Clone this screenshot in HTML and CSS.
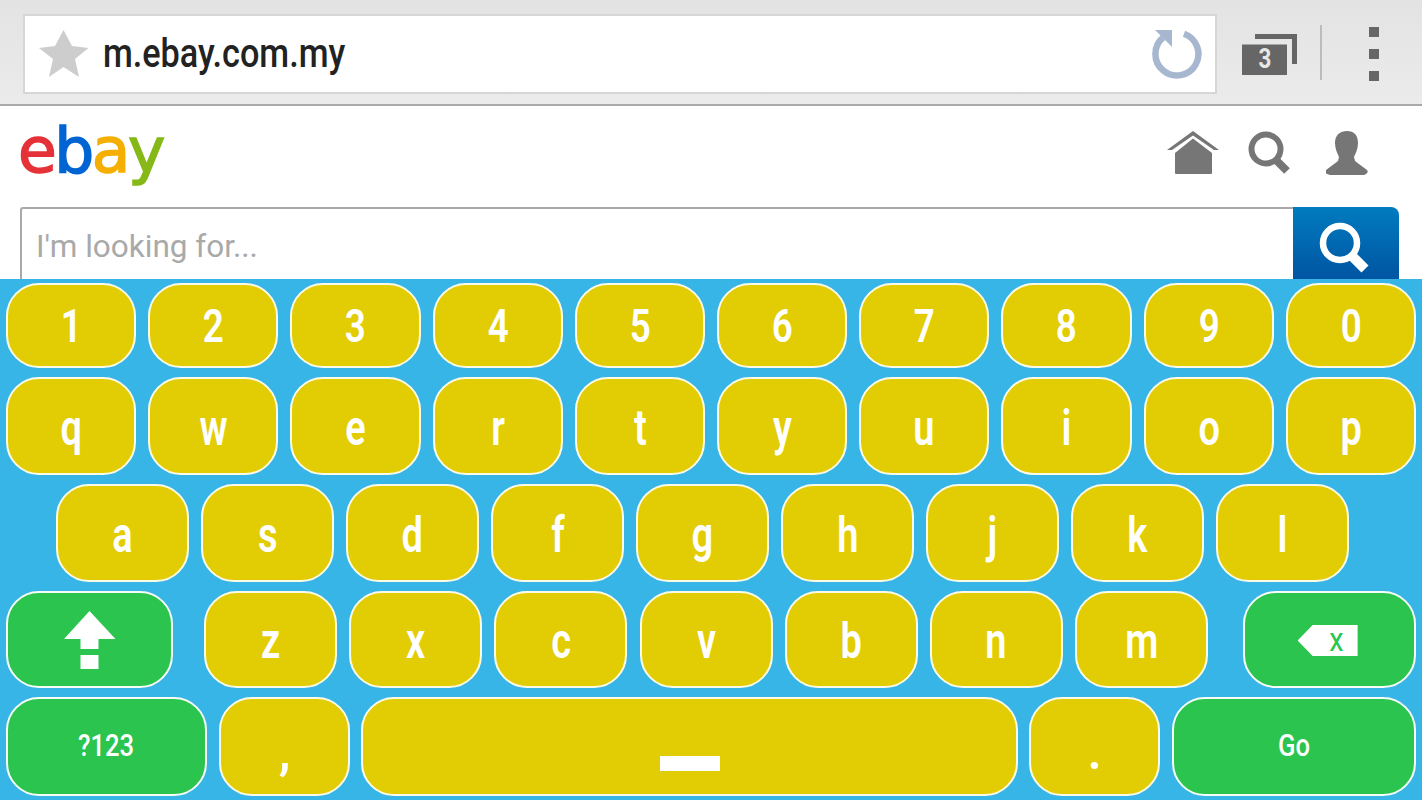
FILE: index.html
```html
<!DOCTYPE html>
<html lang="en">
<head>
<meta charset="utf-8">
<title>m.ebay.com.my</title>
<link rel="stylesheet" href="styles.css">
</head>
<body>
<header class="toolbar">
  <div class="urlbar">
    <svg class="star" width="50" height="48" viewBox="0 0 50 48"><path fill="#cdcdcd" d="M24.500 0L33 16l16.500 2L36 29l4 18-15.500-10L10 47l4-18L0 18l16-2z"/></svg>
    <span class="url"><span class="url-inner">m.ebay.com.my</span></span>
    <svg class="reload" width="52" height="52" viewBox="0 0 52 52"><path fill="none" stroke="#a7b7cf" stroke-width="6.500" d="M33 5.700A21.500 21.500 0 1 1 12 9.600"/><path fill="#a7b7cf" d="M4 2h17v17z"/></svg>
  </div>
  <svg class="tabs" width="56" height="44" viewBox="0 0 56 44"><path fill="none" stroke="#666" stroke-width="5" d="M13 2.500h39.500V30"/><rect x="0" y="10.500" width="45" height="30.500" fill="#666"/></svg>
  <span class="tab-count">3</span>
  <div class="divider"></div>
  <div class="menu"><i></i><i></i><i></i></div>
</header>
<main class="page">
  <div class="site-head">
    <div class="logo"><span class="lr">e</span><span class="lb">b</span><span class="ly">a</span><span class="lg">y</span></div>
    <div class="site-icons">
      <svg class="ic-home" width="52" height="44" viewBox="0 0 52 44"><path fill="#767676" d="M26 7.500L45 22v20a1 1 0 0 1-1 1H9a1 1 0 0 1-1-1V22z"/><path fill="#767676" d="M26 0l26 19h-5L26 4.500 5 19H0z"/></svg>
      <svg class="ic-search" width="44" height="44" viewBox="0 0 44 44"><circle cx="18" cy="18" r="14.500" fill="none" stroke="#767676" stroke-width="6"/><path stroke="#767676" stroke-width="8" d="M27 28l12 12"/></svg>
      <svg class="ic-user" width="42" height="44" viewBox="0 0 42 44"><path fill="#767676" d="M21 0c7 0 11 4 11 12 0 5-2 10-4 14l1 4 12 9c1 1 1 3-1 4l-2 1H4l-3-1c-2-1-2-3-1-4l12-9 1-4c-2-4-4-9-4-14C9 4 14 0 21 0z"/></svg>
    </div>
  </div>
  <div class="search">
    <div class="search-box"><span>I'm looking for...</span></div>
    <div class="search-btn">
      <svg width="52" height="52" viewBox="0 0 52 52"><circle cx="21" cy="21" r="17" fill="none" stroke="#fff" stroke-width="6.500"/><path stroke="#fff" stroke-width="10" d="M32 33l14 14"/></svg>
    </div>
  </div>
</main>
<section class="keyboard">
  <div class="row row-num">
    <div class="key"><span class="g">1</span></div><div class="key"><span class="g">2</span></div><div class="key"><span class="g">3</span></div><div class="key"><span class="g">4</span></div><div class="key"><span class="g">5</span></div><div class="key"><span class="g">6</span></div><div class="key"><span class="g">7</span></div><div class="key"><span class="g">8</span></div><div class="key"><span class="g">9</span></div><div class="key"><span class="g">0</span></div>
  </div>
  <div class="row row-top">
    <div class="key"><span class="l">q</span></div><div class="key"><span class="l">w</span></div><div class="key"><span class="l">e</span></div><div class="key"><span class="l">r</span></div><div class="key"><span class="l">t</span></div><div class="key"><span class="l">y</span></div><div class="key"><span class="l">u</span></div><div class="key"><span class="l">i</span></div><div class="key"><span class="l">o</span></div><div class="key"><span class="l">p</span></div>
  </div>
  <div class="row row-home">
    <div class="key"><span class="l">a</span></div><div class="key"><span class="l">s</span></div><div class="key"><span class="l">d</span></div><div class="key"><span class="l">f</span></div><div class="key"><span class="l">g</span></div><div class="key"><span class="l">h</span></div><div class="key"><span class="l">j</span></div><div class="key"><span class="l">k</span></div><div class="key"><span class="l">l</span></div>
  </div>
  <div class="row row-low">
    <div class="key fn shift"><svg width="52" height="58" viewBox="0 0 52 58"><path fill="#fff" d="M25.500 0L51.500 28H34.500V38H16.500V28H0z"/><rect x="16.500" y="44" width="18" height="14" fill="#fff"/></svg></div>
    <div class="letters">
      <div class="key"><span class="l">z</span></div><div class="key"><span class="l">x</span></div><div class="key"><span class="l">c</span></div><div class="key"><span class="l">v</span></div><div class="key"><span class="l">b</span></div><div class="key"><span class="l">n</span></div><div class="key"><span class="l">m</span></div>
    </div>
    <div class="key fn back"><div class="back-icon"><span>x</span></div></div>
  </div>
  <div class="row row-bottom">
    <div class="key fn sym"><span class="s">?123</span></div>
    <div class="key"><span class="p">,</span></div>
    <div class="key space"><i></i></div>
    <div class="key"><span class="p">.</span></div>
    <div class="key fn go"><span class="s">Go</span></div>
  </div>
</section>
</body>
</html>
```

FILE: styles.css
```css
* { box-sizing: border-box; }
html, body { margin: 0; height: 800px; overflow: hidden; background: #fff; }
body { display: flex; flex-direction: column; font-family: Roboto, "Liberation Sans", sans-serif; }

.toolbar {
  position: relative;
  flex: 0 0 106px;
  display: flex;
  align-items: flex-start;
  padding: 14px 0 0 23px;
  background: linear-gradient(#e3e3e3, #ebebeb);
  border-bottom: 2px solid #a9a9a9;
}
.urlbar {
  width: 1194px;
  height: 80px;
  display: flex;
  align-items: center;
  padding: 0 12px 0 14px;
  background: #fff;
  border: 2px solid #d6d6d6;
}
.star { flex: none; }
.url { flex: 1; margin-left: 14px; font-size: 40px; line-height: 44px; color: #222; font-weight: 500; }
.url-inner { display: inline-block; transform: scaleX(.855); transform-origin: left center; white-space: nowrap; }
.reload { flex: none; }
.tabs { flex: none; margin: 20px 0 0 25px; }
.tab-count {
  position: absolute;
  left: 1255px;
  top: 43px;
  width: 20px;
  text-align: center;
  font-size: 28px;
  line-height: 32px;
  font-weight: 700;
  color: #e6e6e6;
  transform: scaleX(.8);
}
.divider { flex: none; width: 2px; height: 55px; margin: 11px 0 0 22px; background: #bcbcbc; }
.menu { flex: none; display: flex; flex-direction: column; gap: 12px; margin: 13px 0 0 47px; }
.menu i { display: block; width: 10px; height: 10px; background: #666; }

.page { flex: 0 0 173px; overflow: hidden; padding: 0 23px 0 20px; background: #fff; }
.site-head { height: 101px; display: flex; justify-content: space-between; align-items: flex-start; }
.logo {
  margin: 7px 0 0 -2px;
  font-family: "DejaVu Sans", "Liberation Sans", sans-serif;
  font-size: 63px;
  line-height: 76px;
  letter-spacing: -2.500px;
  -webkit-text-stroke: 1.500px currentColor;
  white-space: nowrap;
}
.lr { color: #e53238; }
.lb { color: #0064d2; }
.ly { color: #f5af02; }
.lg { color: #86b817; }
.site-icons { display: flex; align-items: flex-start; margin: 25px 31px 0 0; }
.ic-search { margin-left: 29px; }
.ic-user { margin-left: 34px; }
.search { height: 90px; display: flex; }
.search-box {
  flex: 1;
  padding: 19px 0 0 14px;
  background: #fff;
  border: 2px solid #a9a9a9;
  border-right: 0;
  border-radius: 3px 0 0 0;
  font-size: 31.500px;
  line-height: 38px;
  color: #a9a9a9;
}
.search-btn {
  flex: 0 0 106px;
  height: 90px;
  padding: 15px 0 0 26px;
  border-radius: 0 8px 0 0;
  background: linear-gradient(#007bbf, #0055a2 72px);
}
.search-btn svg { display: block; }

.keyboard { flex: 1; display: flex; flex-direction: column; gap: 9px; padding: 4px 6px 0; background: #36b5e6; }
.row { display: flex; gap: 12px; }
.row-num { height: 85px; }
.row-top { height: 98px; }
.row-home { height: 98px; padding-left: 50px; }
.row-low { height: 97px; }
.row-bottom { height: 99px; }
.row-num .key, .row-top .key { flex: 1 1 0; }
.row-home .key { flex: 0 0 133px; }

.key {
  display: flex;
  align-items: center;
  justify-content: center;
  border: 2.500px solid #fbfae6;
  border-radius: 33px;
  background: #e2cd05;
  color: #fff;
}
.fn { background: #2ac44e; border-color: #f6fcf6; }
.g, .l, .s, .p { display: inline-block; }
.g { font-size: 46px; line-height: 50px; font-weight: 600; transform: scaleX(.8); }
.l { font-size: 50px; line-height: 56px; font-weight: 600; transform: scaleX(.76); margin-top: 3px; }
.p { font-size: 50px; line-height: 56px; font-weight: 600; margin-top: 10px; }
.s { font-size: 32px; line-height: 36px; font-weight: 500; transform: scaleX(.8); margin-top: -3px; }

.shift { flex: 0 0 167px; }
.letters { display: flex; gap: 12.200px; margin: 0 23px 0 19px; }
.letters .key { width: 133px; }
.back { flex: 0 0 173px; }
.back-icon {
  width: 60px;
  height: 31px;
  display: flex;
  align-items: center;
  justify-content: flex-end;
  padding: 0 13px 3px 0;
  background: #fff;
  clip-path: polygon(25% 0, 100% 0, 100% 100%, 25% 100%, 0 50%);
  color: #2ac44e;
  font-size: 34px;
  font-weight: 400;
  margin: 2px 4px 0 0;
}
.back-icon span { line-height: 28px; display: inline-block; transform: scaleX(.85); }

.sym { flex: 0 0 201px; }
.row-bottom > .key:nth-child(2), .row-bottom > .key:nth-child(4) { flex: 0 0 131px; }
.row-bottom > .key:nth-child(3) { flex: 0 0 657px; margin: 0 -1px; }
.go { flex: 0 0 244px; }
.space { align-items: flex-end; padding-bottom: 23px; }
.space i { display: block; width: 60px; height: 15px; background: #fff; }
```
